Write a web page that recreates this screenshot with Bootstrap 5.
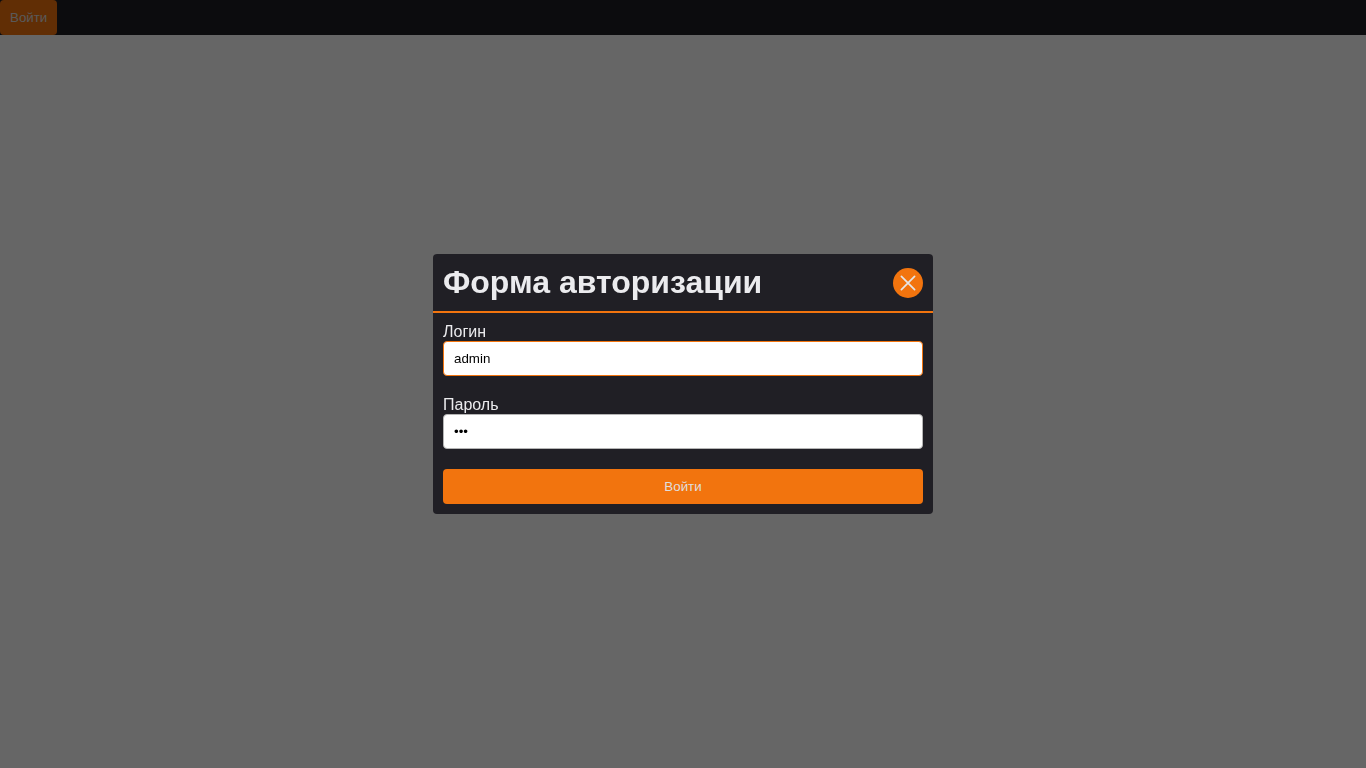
<!DOCTYPE html>
<html lang="ru">
<head>
<meta charset="utf-8">
<meta name="viewport" content="width=device-width, initial-scale=1">
<title>Форма авторизации</title>
<link href="https://cdn.jsdelivr.net/npm/bootstrap@5.3.0/dist/css/bootstrap.min.css" rel="stylesheet">
<style>
  :root {
    --dark: #201f25;
    --accent: #f2740e;
    --light-text: #ebebee;
  }
  body { font-family: "Liberation Sans", Arial, sans-serif; font-size: 16px; line-height: 18px; background: #fff; }
  .topbar { background: var(--dark); }
  .btn-accent {
    --bs-btn-color: #dfdfdf;
    --bs-btn-bg: var(--accent);
    --bs-btn-hover-color: #fff;
    --bs-btn-hover-bg: #d9650a;
    --bs-btn-active-color: #fff;
    --bs-btn-active-bg: #c55b08;
    --bs-btn-border-width: 0;
    --bs-btn-border-radius: 4px;
    --bs-btn-padding-x: 10px;
    --bs-btn-padding-y: 10px;
    --bs-btn-line-height: 15px;
  }
  /* form controls keep the browser's own text size */
  .btn-accent, .login-field { font-size: revert; }
  .login-modal {
    --bs-modal-width: 500px;
    --bs-modal-bg: var(--dark);
    --bs-modal-color: var(--light-text);
    --bs-modal-border-width: 0;
    --bs-modal-border-radius: 4px;
    --bs-modal-inner-border-radius: 4px;
    --bs-modal-padding: 10px;
    --bs-modal-header-padding: 10px;
    --bs-modal-header-border-width: 2px;
    --bs-modal-header-border-color: var(--accent);
    background: rgba(0, 0, 0, .6);
  }
  .login-title { font-size: 32px; line-height: 37px; font-weight: 700; }
  .login-form { gap: 20px; }
  .btn-round { width: 30px; height: 30px; }
  .login-field { height: 35px; padding: 0 10px; border: 1px solid #b5b5b5; border-radius: 4px; color: #000; background: #fff; }
  .login-field:focus { border-color: var(--accent); box-shadow: none; color: #000; }
  .login-field.current { border-color: var(--accent); }
</style>
</head>
<body>
<header class="topbar d-flex">
  <button type="button" class="btn btn-accent">Войти</button>
</header>

<div class="modal login-modal d-block" role="dialog" aria-modal="true" aria-labelledby="loginTitle">
  <div class="modal-dialog modal-dialog-centered">
    <div class="modal-content">
      <div class="modal-header">
        <h1 class="modal-title login-title" id="loginTitle">Форма авторизации</h1>
        <button type="button" class="btn btn-accent btn-round rounded-circle p-0 d-flex align-items-center justify-content-center" aria-label="Закрыть">
          <svg width="16" height="16" viewBox="0 0 16 16" fill="none" stroke="#e6e6e6" stroke-width="1.7" stroke-linecap="round" aria-hidden="true"><path d="M1.4 1.4 14.6 14.6M14.6 1.4 1.4 14.6"/></svg>
        </button>
      </div>
      <form class="modal-body login-form d-flex flex-column">
        <div class="d-flex flex-column">
          <label for="login">Логин</label>
          <input type="text" class="form-control login-field current" id="login" value="admin" autocomplete="username">
        </div>
        <div class="d-flex flex-column">
          <label for="password">Пароль</label>
          <input type="password" class="form-control login-field" id="password" value="123" autocomplete="current-password">
        </div>
        <button type="submit" class="btn btn-accent">Войти</button>
      </form>
    </div>
  </div>
</div>
<script src="https://cdn.jsdelivr.net/npm/bootstrap@5.3.0/dist/js/bootstrap.bundle.min.js"></script>
</body>
</html>
